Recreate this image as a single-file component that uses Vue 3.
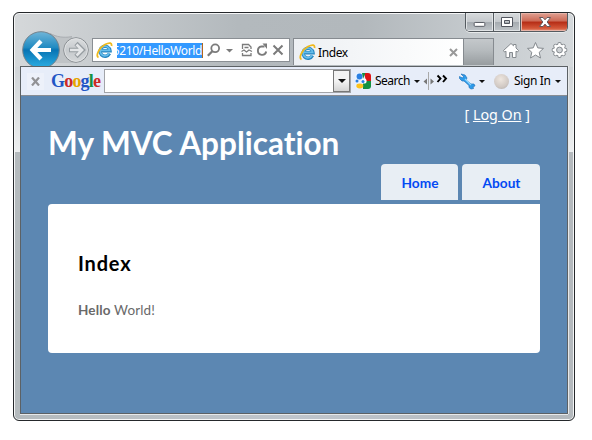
<script setup>
const menu = ['Home', 'About']
const teeth = [0, 45, 90, 135]
</script>

<template>
  <div class="desktop">
    <div class="window">
      <div class="caption">
        <div class="controls">
          <span class="ctl min"><svg width="28" height="18" viewBox="0 0 28 18"><rect x="8.500" y="9.500" width="11" height="4" rx="1" fill="#fff" stroke="#53565f" /></svg></span>
          <span class="ctl max"><svg width="26" height="18" viewBox="0 0 26 18"><path d="M7.500 4.500h11v9h-11zM10.500 7.500v3h5v-3z" fill="#fff" fill-rule="evenodd" stroke="#53565f" /></svg></span>
          <span class="ctl close"><svg width="47" height="18" viewBox="0 0 47 18"><path d="M18.500 4.500h3.500l2 2.300 2-2.300h3.500l-3.300 4.500 3.300 4.500h-3.500l-2-2.400-2 2.400h-3.500l3.300-4.500z" fill="#fff" stroke="#64595e" /></svg></span>
        </div>
      </div>

      <div class="nav">
        <svg class="arrows" width="72" height="35" viewBox="20 31 72 35">
          <defs>
            <linearGradient id="blue" x2="0" y2="1"><stop offset="0" stop-color="#70b5d8" /><stop offset=".43" stop-color="#218bc2" /><stop offset=".5" stop-color="#0874b4" /><stop offset="1" stop-color="#2cafe4" /></linearGradient>
            <linearGradient id="grey" x2="0" y2="1"><stop offset="0" stop-color="#dcdee0" /><stop offset=".5" stop-color="#c6cacd" /><stop offset="1" stop-color="#d4d7d9" /></linearGradient>
          </defs>
          <path d="M50 33.500C57 37 63 38 72 36.500L77 63H50z" fill="#bfc3c6" />
          <path d="M50 33.500C57 37 63 38 72 36.700" fill="none" stroke="#a9adb1" />
          <circle cx="41" cy="50" r="18.300" fill="url(#blue)" stroke="#75838d" />
          <path d="M51 50H34M41 41l-8.500 9 8.500 9" fill="none" stroke="#fff" stroke-width="4.200" />
          <circle cx="76" cy="50" r="12.300" fill="url(#grey)" stroke="#888d91" />
          <circle cx="76" cy="50" r="11.300" fill="none" stroke="#dfe1e3" />
          <path d="M69 50h11M76 43.500l6.500 6.500-6.500 6.500" fill="none" stroke="#969ca1" stroke-width="4.600" />
          <path d="M70 50h10M76.500 44.500l5.500 5.500-5.500 5.500" fill="none" stroke="#e4e6e8" stroke-width="2.700" />
        </svg>
        <div class="address">
          <svg class="ie" width="17" height="17" viewBox="0 0 17 17">
            <path d="M13.500 11.500A5 5 0 1 1 14 8.700H4.500" fill="none" stroke="#2786c1" stroke-width="3.400" />
            <path d="M13.200 11.200A4.800 4.800 0 1 1 13.700 8.400H5" fill="none" stroke="#65bdeb" stroke-width="1.700" />
            <path d="M2.500 15.500C-1 13.500 4 5 9 2.500s7-1.500 6.500 1.500" fill="none" stroke="#efb91d" stroke-width="1.800" />
          </svg>
          <span class="url"><span>5210/HelloWorld</span></span>
          <svg width="82" height="22" viewBox="207 39 82 22" fill="none" stroke="#7b7b7b">
            <circle cx="215.200" cy="48.300" r="3.900" stroke-width="1.800" /><path d="M212.300 51.300l-4.500 4.500" stroke-width="2.300" />
            <path d="M226 49h7l-3.500 3.500z" fill="#7b7b7b" stroke="none" />
            <path d="M242.500 49v-4.500h6l2.500 2.500v2M242.500 53v2.500h8.500V53M244.500 47.500h4" stroke-width="1.300" /><path d="M241.500 51.500l2.500-1.500 2.500 2 2.500-2 3 1.500" stroke-width="1.200" />
            <path d="M264.500 46.500h-3a4.200 4.200 0 1 0 4.700 5" stroke-width="1.900" /><path d="M262.500 43.500h4.500v5.500z" fill="#7b7b7b" stroke="none" />
            <path d="M273.500 45.500l9 9m0-9l-9 9" stroke-width="2" />
          </svg>
        </div>
        <div class="tab">
          <svg class="ie" width="17" height="17" viewBox="0 0 17 17">
            <path d="M13.500 11.500A5 5 0 1 1 14 8.700H4.500" fill="none" stroke="#2786c1" stroke-width="3.400" />
            <path d="M13.200 11.200A4.800 4.800 0 1 1 13.700 8.400H5" fill="none" stroke="#65bdeb" stroke-width="1.700" />
            <path d="M2.500 15.500C-1 13.500 4 5 9 2.500s7-1.500 6.500 1.500" fill="none" stroke="#efb91d" stroke-width="1.800" />
          </svg>
          <span class="tab-name">Index</span>
          <svg class="tab-x" width="9" height="9" viewBox="0 0 9 9"><path d="M1 1l7 7m0-7l-7 7" stroke="#999" stroke-width="2" /></svg>
        </div>
        <div class="newtab"></div>
        <svg class="tools" width="68" height="20" viewBox="500 40 68 20" fill="#fff" stroke="#858a8f">
          <path d="M503.500 50.500l7.500-7 2.500 2.300v-1.300h2.500v3.500l2.500 2.500-1 1.500-1.500-.8v6.300h-3.500v-5h-3v5H506v-6.300l-1.500.8z" />
          <path d="M535.500 42.500l2.300 5.400 5.700.5-4.300 3.900 1.300 5.700-5-3-5 3 1.300-5.700-4.300-3.900 5.700-.5z" />
          <g transform="translate(559.500 50)">
            <g stroke="#858a8f" stroke-width="4.400" stroke-linecap="round"><path v-for="a in teeth" :key="a" d="M0-5.700V5.700" :transform="`rotate(${a})`" /></g>
            <circle r="5.800" />
            <g stroke="#fff" stroke-width="2.600" stroke-linecap="round"><path v-for="a in teeth" :key="a" d="M0-5.700V5.700" :transform="`rotate(${a})`" /></g>
            <circle r="5" stroke="none" />
            <circle r="2.900" fill="#d0d3d6" />
          </g>
        </svg>
      </div>

      <div class="frame">
        <div class="toolbar">
          <span class="bar-x"><svg width="9" height="9" viewBox="0 0 9 9"><path d="M1 .5l7 8m0-8l-7 8" stroke="#929295" stroke-width="2.200" /></svg></span>
          <span class="google"><b class="b">G</b><b class="r">o</b><b class="y">o</b><b class="b">g</b><b class="g">l</b><b class="r">e</b></span>
          <div class="search"><span class="drop"><i class="tri big"></i></span></div>
          <svg class="gicon" width="16" height="16" viewBox="0 0 16 16">
            <path d="M0 2a2 2 0 0 1 2-2h8v16H2a2 2 0 0 1-2-2z" fill="#e6f1ff" /><path d="M9 0h4q3 0 3 3v5h-5z" fill="#dc1515" /><path d="M8 8h8v5q0 3-3 3H8z" fill="#149141" /><path d="M7 0h3.500L8 6z" fill="#149141" />
            <circle cx="4.500" cy="3.500" r="2.900" fill="#287ee3" /><circle cx="9" cy="8" r="2.600" fill="#fff" /><circle cx="8" cy="8.500" r="1.500" fill="#287ee3" /><circle cx="2" cy="8" r="1.500" fill="#287ee3" /><ellipse cx="4.800" cy="13" rx="3.500" ry="2.400" fill="#ffc31c" />
          </svg>
          <span class="bar-text search-text">Search</span>
          <i class="tri"></i>
          <svg class="split" width="26" height="18" viewBox="423 71 26 18">
            <path d="M428.500 71v18" stroke="#aaa" /><path d="M427 77.500v6l-3.500-3zM430.500 77.500v6l3.500-3z" fill="#777" />
            <path d="M437.500 74.500l3 3-3 3.500m5.500-6.500l3 3-3 3.500" fill="none" stroke="#000" stroke-width="1.900" />
          </svg>
          <svg class="wrench" width="17" height="17" viewBox="0 0 17 17"><path d="M2 1l4 1 2 3-1 2 5 4h3l1 2-2 .5.500 2-2.500.5-2-1.500v-2L5 8H3L.5 5.500.5 3.500 3.500 5 4.500 3.500z" fill="#2e9ceb" stroke="#2476bd" stroke-width=".7" /><path d="M6 6l6 6" stroke="#8dd5ff" stroke-width="1.200" /></svg>
          <i class="tri"></i>
          <span class="avatar"></span>
          <span class="bar-text sign-text">Sign In</span>
          <i class="tri"></i>
        </div>

        <div class="page">
          <div class="logon">[ <a>Log On</a> ]</div>
          <h1>My MVC Application</h1>
          <div class="menu"><a v-for="m in menu" :key="m">{{ m }}</a></div>
          <div class="main">
            <h2>Index</h2>
            <p><strong>Hello</strong> World!</p>
          </div>
        </div>
      </div>
    </div>
  </div>
</template>

<style>
body { background: #fff; }
</style>

<style scoped>
* { box-sizing: border-box; }
.desktop { width: 592px; height: 440px; padding: 12px 0 0 13px; overflow: hidden; background: #fff; }
.window {
  width: 562px; height: 409px; padding: 0 6px 6px; border: 1px solid #25282b; border-radius: 6px;
  box-shadow: inset 0 0 0 1px #f4f5f6;
  background:
    linear-gradient(90deg, #d5d8da, #b3b9bd 40%, #b2b8bc 62%, #d5d9dc) 0 0 / 100% 54px no-repeat,
    linear-gradient(#d0d4d7, #eceeef) 0 54px / 100% 85px no-repeat,
    linear-gradient(90deg, #b4babd, #bfc5cc 50%, #b4b9bd);
  font-family: "Noto Sans", sans-serif; font-size: 12px; color: #000;
}
.caption { height: 19px; display: flex; justify-content: flex-end; }
.controls { display: flex; width: 103px; height: 19px; border: 1px solid #555b60; border-top: 0; border-radius: 0 0 5px 5px; overflow: hidden; box-shadow: 0 1px 0 #e8eaeb; }
.ctl { display: flex; background: linear-gradient(#d7dadc, #c5c9cd 48%, #a5abb0 50%, #c0c5c9); box-shadow: inset 0 0 0 1px #e1e4e6; }
.min, .max { border-right: 1px solid #555b60; }
.min { width: 28px; }
.max { width: 27px; }
.close { flex: 1; background: linear-gradient(#e0a193, #cc6955 45%, #b52c15 50%, #d4583a 85%, #e59980); box-shadow: inset 0 0 0 1px #e7b4a8; }
.nav { display: flex; height: 34px; }
.arrows { flex: none; margin-top: -1px; }
.address { width: 198px; height: 24px; margin-top: 6px; border: 1px solid #8a8f94; background: #fff; display: flex; align-items: center; }
.ie { flex: none; }
.address .ie { margin-left: 3px; }
.url { display: flex; justify-content: flex-end; overflow: hidden; width: 86px; height: 15px; margin: 0 4px 0 4px; background: #3399ff; color: #fff; line-height: 15px; border-right: 1px solid #b06a1c; white-space: nowrap; }
.url span { letter-spacing: -.36px; flex: none; }
.tab { display: flex; align-items: center; width: 171px; height: 27px; margin: 6px 0 0 3px; padding-left: 5px; border: 1px solid #868b90; border-bottom: 0; background: linear-gradient(90deg, #edf0f3, #fff); }
.tab-name { margin: 1px 0 0 2px; line-height: 16px; letter-spacing: -.4px; }
.tab-x { margin: 0 5px 0 auto; }
.newtab { width: 30px; height: 27px; margin-top: 6px; border: 1px solid #868b90; border-width: 1px 1px 0 0; background: linear-gradient(#c4c8cb, #b5babd 45%, #989da0); }
.tools { margin: 8px 0 0 6px; }
.frame { height: 348px; border: 1px solid #5c6165; display: flex; flex-direction: column; box-shadow: 0 1px 0 #e7e9ea, 1px 0 0 #e7e9ea; }
.toolbar { height: 29px; background: #e7edf9; border-bottom: 1px solid #888d94; display: flex; align-items: center; }
.bar-x { display: flex; align-items: center; justify-content: center; width: 17px; height: 17px; margin-left: 6px; background: #edf1fa; }
.google { width: 49px; margin: -1px 4px 0 7px; font: 18px/20px "Liberation Serif", serif; letter-spacing: -.8px; white-space: nowrap; }
.google b { font-weight: bold; }
.b { color: #2255c5; } .r { color: #cc2926; } .y { color: #e6a500; } .g { color: #159241; }
.search { display: flex; justify-content: flex-end; width: 247px; height: 24px; border: 1px solid #a2a4a8; background: #fff; }
.drop { width: 17px; display: flex; align-items: center; justify-content: center; border: 1px solid #777; background: linear-gradient(#f3f3f3 50%, #d4d4d4); }
.tri { width: 0; height: 0; flex: none; border: 3px solid transparent; border-top-color: #111; border-bottom: 0; }
.tri.big { border-width: 4px 4px 0; }
.gicon { margin-left: 4px; }
.bar-text { line-height: 16px; white-space: nowrap; }
.search-text { width: 36px; margin: 0 3px 0 4px; letter-spacing: -.5px; }
.split { margin-left: 3px; }
.wrench { margin: 0 3px 0 10px; }
.avatar { width: 15px; height: 15px; margin: 1px 5px 0 9px; border-radius: 50%; background: radial-gradient(circle at 45% 35%, #eee6df, #d1c9c4 60%, #aaa5a2); }
.sign-text { width: 37px; margin-right: 4px; letter-spacing: -.35px; }
.page { flex: 1; padding: 8px 27px 0; background: #5c87b2; font-family: "Lato", sans-serif; font-variant-ligatures: none; }
.logon { height: 22px; padding-right: 10px; text-align: right; color: #fff; font: 14.300px/21px "Noto Sans", sans-serif; }
.logon a { text-decoration: underline; }
h1 { height: 38px; margin: 0; color: #fff; font: bold 31.500px/35px "Lato", sans-serif; font-variant-ligatures: none; white-space: nowrap; }
.menu { display: flex; justify-content: flex-end; gap: 4px; height: 36px; margin-bottom: 4px; }
.menu a { width: 77px; padding-left: 1px; border-radius: 4px 4px 0 0; background: #e8eef4; color: #034af3; font-size: 13.700px; font-weight: bold; line-height: 37px; text-align: center; }
.menu a + a { width: 78px; }
.main { height: 149px; padding: 45px 30px 0; border-radius: 4px 0 4px 4px; background: #fff; }
h2 { margin: 0; color: #000; font: bold 20px/29px "Lato", sans-serif; letter-spacing: .8px; }
p { margin: 22px 0 0; color: #696969; font: 13.500px/20px "Lato", sans-serif; letter-spacing: .15px; }
</style>
